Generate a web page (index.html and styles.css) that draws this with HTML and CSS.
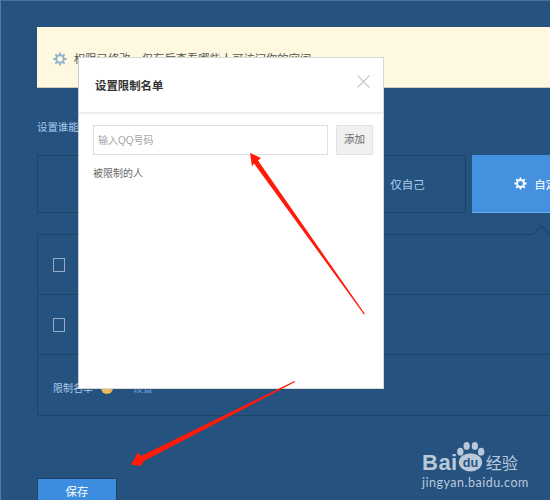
FILE: index.html
```html
<!DOCTYPE html>
<html lang="en">
<head>
    <meta charset="UTF-8">
    <title>设置限制名单</title>
    <link rel="stylesheet" href="styles.css">
</head>
<body>
    <svg class="defs" width="0" height="0">
        <symbol id="gear" viewBox="0 0 16 16">
            <circle cx="8" cy="8" r="4.3" fill="none" stroke="currentColor" stroke-width="2.4"/>
            <path d="M8 0.5V3M8 13V15.5M0.5 8H3M13 8H15.5M2.7 2.7L4.5 4.5M11.5 11.5L13.3 13.3M13.3 2.7L11.5 4.5M4.5 11.5L2.7 13.3" stroke="currentColor" stroke-width="2.2"/>
        </symbol>
    </svg>
    <div class="page">
        <div class="notice">
            <svg class="gear"><use href="#gear"/></svg>
            <span>权限已修改，仅有后查看哪些人可访问你的空间</span>
        </div>
        <div class="label">设置谁能访问我的空间</div>
        <div class="tabs">
            <div class="tab"></div>
            <div class="tab"></div>
            <div class="tab"><span class="tab-text shifted">仅自己</span></div>
            <div class="tab active">
                <svg class="gear"><use href="#gear"/></svg>
                <span class="tab-text">自定义</span>
            </div>
        </div>
        <div class="panel">
            <i class="notch"></i>
            <div class="row"><i class="check"></i></div>
            <div class="row"><i class="check"></i></div>
            <div class="row last">
                <span class="row-name">限制名单</span>
                <i class="dot"></i>
                <span class="row-link">设置</span>
            </div>
        </div>
        <div class="save">保存</div>
    </div>

    <div class="modal">
        <div class="modal-head">
            <span class="modal-title">设置限制名单</span>
            <svg class="close" viewBox="0 0 13 13">
                <path d="M0.5 0.5L12.5 12.5M12.5 0.5L0.5 12.5" stroke="#c9c9c9" stroke-width="1.3" fill="none"/>
            </svg>
        </div>
        <div class="modal-body">
            <div class="add-row">
                <div class="input">输入QQ号码</div>
                <div class="add-btn">添加</div>
            </div>
            <div class="limited">被限制的人</div>
        </div>
    </div>

    <svg class="arrows" width="550" height="500" viewBox="0 0 550 500">
        <polygon points="250,153 261,158 258,160.500 365,314 364,314.500 254,163.500 252,166.500" fill="#ff1a0a"/>
        <polygon points="131,464.500 138,452.500 141,456 294.500,381 295,382 144,461 141,466" fill="#ff1a0a"/>
    </svg>

    <div class="mark">
        <div class="mark-top">
            <span class="mark-bai">Bai</span>
            <svg class="paw" viewBox="0 0 32 32">
                <ellipse cx="5.500" cy="10" rx="3.300" ry="4" fill="#b9c9da"/>
                <ellipse cx="12" cy="4" rx="3.200" ry="4" fill="#b9c9da"/>
                <ellipse cx="20.500" cy="4" rx="3.200" ry="4" fill="#b9c9da"/>
                <ellipse cx="27" cy="10" rx="3.300" ry="4" fill="#b9c9da"/>
                <ellipse cx="16" cy="21" rx="12" ry="9.500" fill="#b9c9da"/>
                <text x="16" y="26" class="paw-text">du</text>
            </svg>
            <span class="mark-cn">经验</span>
        </div>
        <div class="mark-url">jingyan.baidu.com</div>
    </div>
</body>
</html>
```

FILE: styles.css
```css
html, body {
    margin: 0;
    width: 550px;
    height: 500px;
    overflow: hidden;
}
body {
    position: relative;
    background: #265280;
    font-family: "Liberation Sans", "Noto Sans CJK SC", sans-serif;
}
.defs {
    position: absolute;
}
.page {
    height: 500px;
    box-sizing: border-box;
    padding: 26px 0 0 36px;
    border-top: 1px solid #4e7097;
    border-left: 1px solid #587a9e;
}
.notice {
    height: 61px;
    box-sizing: border-box;
    padding: 3px 0 0 16px;
    display: flex;
    align-items: center;
    background: #fff8e0;
    border-bottom: 1px solid #c9cdbf;
    font-size: 11.3px;
    line-height: 16px;
    color: #555;
}
.notice .gear {
    width: 14px;
    height: 14px;
    margin-right: 7px;
    color: #8fb1cf;
}
.label {
    height: 16px;
    margin-top: 32px;
    font-size: 10.400px;
    line-height: 16px;
    color: #a9cdec;
}
.tabs {
    display: flex;
    gap: 6px;
    margin-top: 19px;
}
.tab {
    width: 139px;
    height: 58px;
    flex-shrink: 0;
    box-sizing: border-box;
    display: flex;
    justify-content: center;
    align-items: center;
    gap: 7px;
    border: 1px solid #1e4368;
}
.tab-text {
    font-size: 11.500px;
    color: #a9cdec;
}
.tab-text.shifted {
    margin-left: 22px;
}
.tab.active {
    background: #4491e0;
    border: 0;
    border-bottom: 1px solid #6aa9ea;
}
.tab.active .tab-text {
    color: #fff;
}
.tab.active .gear {
    width: 13px;
    height: 13px;
    color: #fff;
}
.panel {
    position: relative;
    margin-top: 21px;
    border: 1px solid #1e4368;
    border-right: 0;
}
.notch {
    position: absolute;
    left: 497px;
    top: -7px;
    width: 12px;
    height: 12px;
    background: #265280;
    border-top: 1px solid #1e4368;
    border-left: 1px solid #1e4368;
    transform: rotate(45deg);
}
.row {
    height: 59px;
    display: flex;
    align-items: center;
    padding-left: 15px;
    border-bottom: 1px solid #1e4368;
}
.row.last {
    height: 56px;
    padding-top: 4px;
    border-bottom: 0;
    font-size: 10px;
}
.check {
    display: block;
    width: 10px;
    height: 12px;
    border: 1px solid #93abc5;
}
.row-name {
    color: #a9cdec;
}
.dot {
    width: 12px;
    height: 12px;
    margin: 2px 0 0 8px;
    border-radius: 50%;
    background: #efb85a;
}
.row-link {
    margin-left: 20px;
    color: #5fa0dc;
}
.save {
    width: 80px;
    height: 30px;
    margin-top: 62px;
    box-sizing: border-box;
    padding-top: 4px;
    text-align: center;
    background: #3c8de0;
    border: 1px solid #1e4368;
    border-bottom: 0;
    font-size: 11.500px;
    line-height: 18px;
    color: #fff;
}
.modal {
    position: absolute;
    left: 78px;
    top: 57px;
    width: 306px;
    height: 332px;
    box-sizing: border-box;
    background: #fff;
    border: 1px solid #d8d8d8;
    border-left-color: #c5cdd5;
}
.modal-head {
    height: 56px;
    box-sizing: border-box;
    display: flex;
    justify-content: space-between;
    align-items: center;
    padding: 0 13px 0 16px;
    border-bottom: 2px solid #eee;
}
.modal-title {
    font-size: 11.400px;
    font-weight: bold;
    color: #333;
}
.close {
    width: 13px;
    height: 13px;
    margin-bottom: 7px;
}
.modal-body {
    padding: 11px 10px 0 14px;
}
.add-row {
    display: flex;
    gap: 8px;
}
.input {
    flex: 1;
    height: 30px;
    box-sizing: border-box;
    padding-left: 4px;
    border: 1px solid #e0e0e0;
    font-size: 10px;
    line-height: 30px;
    color: #a6a6a6;
}
.add-btn {
    width: 37px;
    height: 30px;
    box-sizing: border-box;
    text-align: center;
    background: #f0f0f0;
    border: 1px solid #e2e2e2;
    font-size: 10.500px;
    line-height: 26px;
    color: #666;
}
.limited {
    margin-top: 12px;
    font-size: 10px;
    line-height: 14px;
    color: #666;
}
.arrows {
    position: absolute;
    left: 0;
    top: 0;
}
.mark {
    position: absolute;
    left: 422px;
    top: 441px;
    width: 110px;
    color: #b9c9da;
}
.mark-top {
    display: flex;
    align-items: flex-end;
    height: 32px;
}
.mark-bai {
    margin: 0 -3px -3px 0;
    font-size: 22px;
    font-weight: bold;
    line-height: 26px;
    letter-spacing: 0.5px;
}
.paw {
    width: 31px;
    height: 31px;
}
.paw-text {
    font-size: 13px;
    font-weight: bold;
    text-anchor: middle;
    fill: #265280;
}
.mark-cn {
    margin-bottom: -3px;
    font-size: 16px;
    line-height: 24px;
}
.mark-url {
    margin-top: 2px;
    font-family: Lato, sans-serif;
    font-size: 12.500px;
    line-height: 16px;
    letter-spacing: 0.5px;
}
```
